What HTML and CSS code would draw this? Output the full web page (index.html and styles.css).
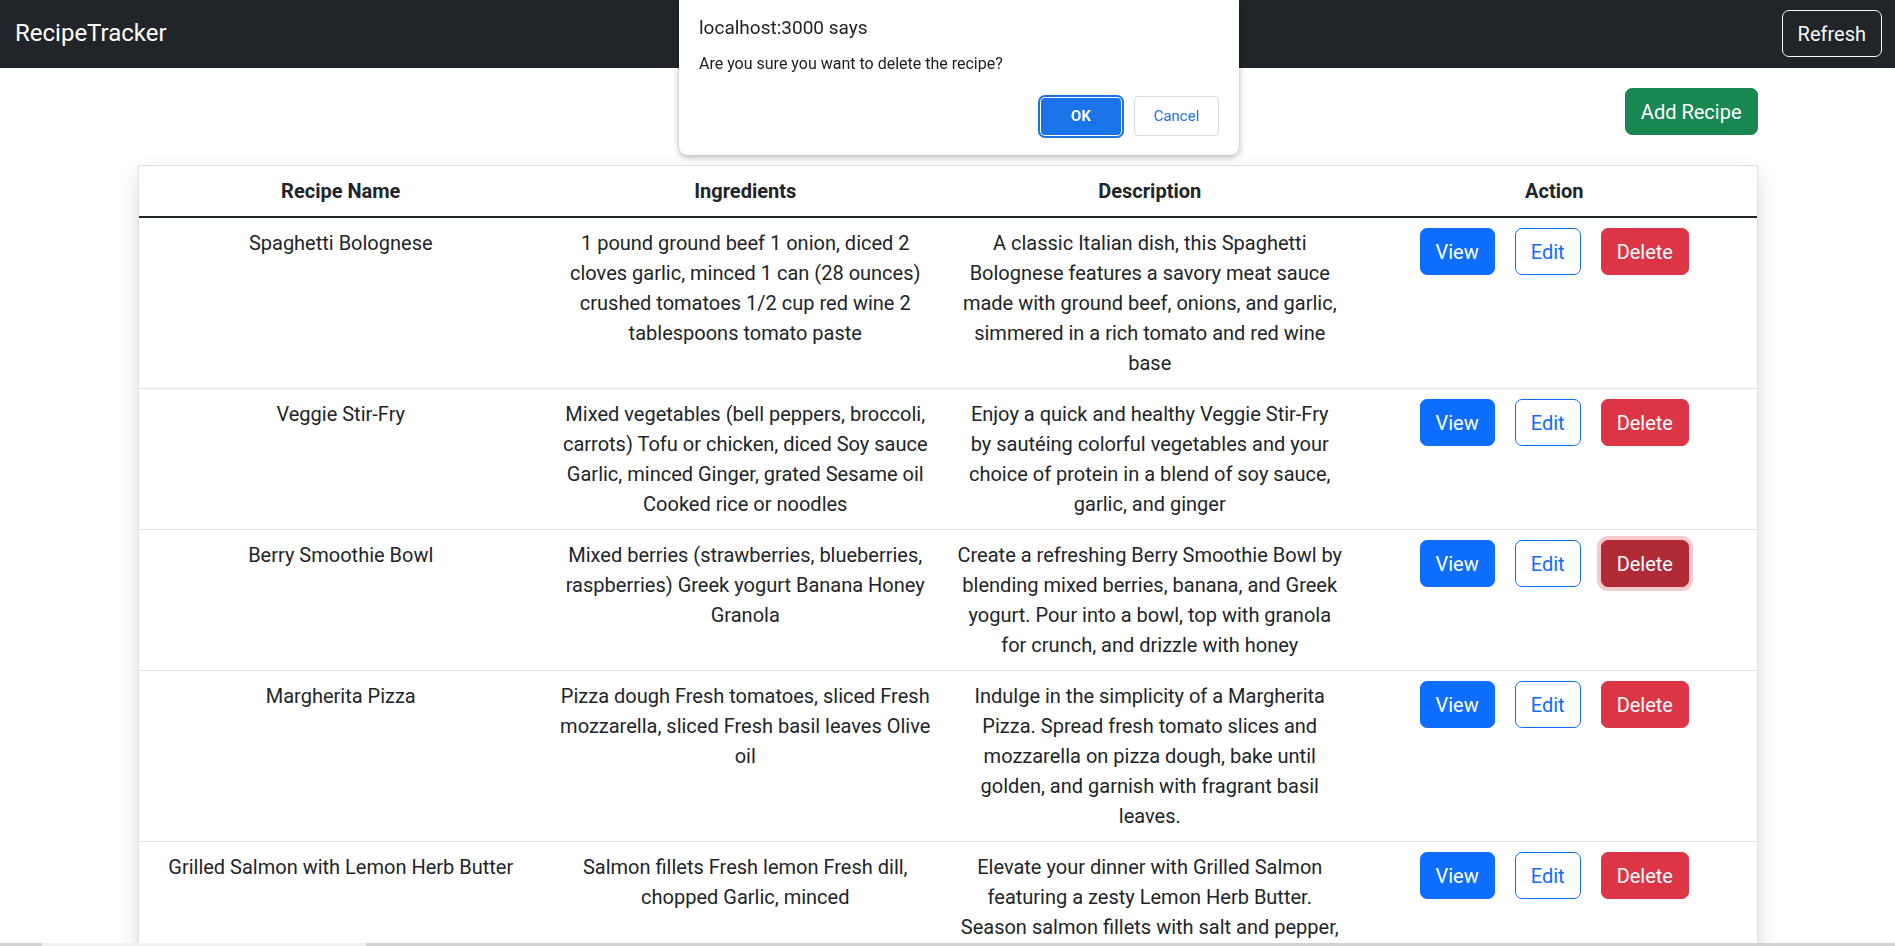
FILE: index.html
```html
<!DOCTYPE html>
<html lang="en">
<head>
<meta charset="utf-8">
<title>RecipeTracker</title>
<link rel="stylesheet" href="styles.css">
</head>
<body>
<nav class="navbar">
  <span class="brand">RecipeTracker</span>
  <button class="btn btn-outline-light">Refresh</button>
</nav>

<main class="container">
  <div class="toolbar">
    <button class="btn btn-success">Add Recipe</button>
  </div>

  <div class="table-card">
    <table class="recipes">
      <thead>
        <tr>
          <th>Recipe Name</th>
          <th>Ingredients</th>
          <th>Description</th>
          <th>Action</th>
        </tr>
      </thead>
      <tbody>
        <tr>
          <td>Spaghetti Bolognese</td>
          <td>1 pound ground beef 1 onion, diced 2<br>cloves garlic, minced 1 can (28 ounces)<br>crushed tomatoes 1/2 cup red wine 2<br>tablespoons tomato paste</td>
          <td>A classic Italian dish, this Spaghetti<br>Bolognese features a savory meat sauce<br>made with ground beef, onions, and garlic,<br>simmered in a rich tomato and red wine<br>base</td>
          <td><div class="actions"><button class="btn btn-primary">View</button><button class="btn btn-outline-primary">Edit</button><button class="btn btn-danger">Delete</button></div></td>
        </tr>
        <tr>
          <td>Veggie Stir-Fry</td>
          <td>Mixed vegetables (bell peppers, broccoli,<br>carrots) Tofu or chicken, diced Soy sauce<br>Garlic, minced Ginger, grated Sesame oil<br>Cooked rice or noodles</td>
          <td>Enjoy a quick and healthy Veggie Stir-Fry<br>by sautéing colorful vegetables and your<br>choice of protein in a blend of soy sauce,<br>garlic, and ginger</td>
          <td><div class="actions"><button class="btn btn-primary">View</button><button class="btn btn-outline-primary">Edit</button><button class="btn btn-danger">Delete</button></div></td>
        </tr>
        <tr>
          <td>Berry Smoothie Bowl</td>
          <td>Mixed berries (strawberries, blueberries,<br>raspberries) Greek yogurt Banana Honey<br>Granola</td>
          <td>Create a refreshing Berry Smoothie Bowl by<br>blending mixed berries, banana, and Greek<br>yogurt. Pour into a bowl, top with granola<br>for crunch, and drizzle with honey</td>
          <td><div class="actions"><button class="btn btn-primary">View</button><button class="btn btn-outline-primary">Edit</button><button class="btn btn-danger is-focused">Delete</button></div></td>
        </tr>
        <tr>
          <td>Margherita Pizza</td>
          <td>Pizza dough Fresh tomatoes, sliced Fresh<br>mozzarella, sliced Fresh basil leaves Olive<br>oil</td>
          <td>Indulge in the simplicity of a Margherita<br>Pizza. Spread fresh tomato slices and<br>mozzarella on pizza dough, bake until<br>golden, and garnish with fragrant basil<br>leaves.</td>
          <td><div class="actions"><button class="btn btn-primary">View</button><button class="btn btn-outline-primary">Edit</button><button class="btn btn-danger">Delete</button></div></td>
        </tr>
        <tr>
          <td>Grilled Salmon with Lemon Herb Butter</td>
          <td>Salmon fillets Fresh lemon Fresh dill,<br>chopped Garlic, minced</td>
          <td>Elevate your dinner with Grilled Salmon<br>featuring a zesty Lemon Herb Butter.<br>Season salmon fillets with salt and pepper,<br>grill to perfection, and top with a<br>homemade lemon herb butter.</td>
          <td><div class="actions"><button class="btn btn-primary">View</button><button class="btn btn-outline-primary">Edit</button><button class="btn btn-danger">Delete</button></div></td>
        </tr>
      </tbody>
    </table>
  </div>
</main>

<div class="alert-dialog" role="alertdialog">
  <div class="alert-title">localhost:3000 says</div>
  <div class="alert-message">Are you sure you want to delete the recipe?</div>
  <div class="alert-buttons">
    <button class="alert-btn alert-ok">OK</button>
    <button class="alert-btn alert-cancel">Cancel</button>
  </div>
</div>

<div class="bottom-strip"><span class="strip-thumb"></span></div>
</body>
</html>
```

FILE: styles.css
```css
* {
  box-sizing: border-box;
}

html,
body {
  margin: 0;
  padding: 0;
}

body {
  font-family: "Segoe UI", Roboto, "Liberation Sans", sans-serif;
  font-size: 20px;
  line-height: 30px;
  color: #212529;
  background: #ffffff;
  overflow: hidden;
}

/* ---------- navbar ---------- */
.navbar {
  display: flex;
  align-items: center;
  justify-content: space-between;
  background: #212529;
  padding: 10px 13px 11px 15px;
}

.brand {
  color: #ffffff;
  font-size: 24px;
  line-height: 37px;
}

/* ---------- buttons ---------- */
.btn {
  font-family: inherit;
  font-size: 20px;
  line-height: 30px;
  padding: 7.5px 15px;
  border: 1px solid transparent;
  border-radius: 7px;
  background: transparent;
  cursor: pointer;
}

.btn-outline-light {
  color: #f8f9fa;
  border-color: #f8f9fa;
}

.btn-success {
  color: #ffffff;
  background: #198754;
  border-color: #198754;
}

.btn-primary {
  color: #ffffff;
  background: #0d6efd;
  border-color: #0d6efd;
}

.btn-outline-primary {
  color: #0d6efd;
  background: #ffffff;
  border-color: #0d6efd;
}

.btn-danger {
  color: #ffffff;
  background: #dc3545;
  border-color: #dc3545;
}

.btn-danger.is-focused {
  background: #b02a37;
  border-color: #b02a37;
  box-shadow: 0 0 0 4px rgba(225, 83, 97, 0.3);
}

/* ---------- layout ---------- */
.container {
  max-width: 1650px;
  margin: 0 auto;
  padding: 0 15px;
}

.toolbar {
  display: flex;
  justify-content: flex-end;
  margin-top: 20px;
  margin-bottom: 30px;
}

.table-card {
  border: 1px solid #dee2e6;
  box-shadow: 0 10px 20px rgba(0, 0, 0, 0.15);
  background: #ffffff;
}

/* ---------- table ---------- */
.recipes {
  width: 100%;
  border-collapse: collapse;
  table-layout: fixed;
}

.recipes th,
.recipes td {
  width: 25%;
  padding: 10px;
  text-align: center;
  vertical-align: top;
  white-space: nowrap;
}

.recipes th {
  font-weight: 700;
  border-bottom: 2px solid #212529;
}

.recipes td {
  border-bottom: 1px solid #dee2e6;
}

.actions {
  display: inline-flex;
  gap: 20px;
}

/* ---------- native alert dialog ---------- */
.alert-dialog {
  position: fixed;
  top: 0;
  left: 679px;
  width: 560px;
  height: 155px;
  padding: 16px 20px 0 20px;
  background: #ffffff;
  border-radius: 0 0 8px 8px;
  box-shadow: 0 2px 6px rgba(0, 0, 0, 0.3), 0 0 1px rgba(0, 0, 0, 0.2);
  font-family: "Segoe UI", Roboto, "Liberation Sans", sans-serif;
  color: #202124;
}

.alert-title {
  font-size: 19px;
  line-height: 24px;
}

.alert-message {
  margin-top: 14px;
  font-size: 16px;
  line-height: 20px;
}

.alert-buttons {
  display: flex;
  justify-content: flex-end;
  align-items: center;
  gap: 13px;
  margin-top: 22px;
}

.alert-btn {
  font-family: inherit;
  font-size: 15px;
  border-radius: 4px;
  cursor: pointer;
}

.alert-ok {
  width: 80px;
  height: 37px;
  color: #ffffff;
  font-weight: 700;
  background: #1a73e8;
  border: none;
  box-shadow: 0 0 0 1px #ffffff, 0 0 0 3px #1a73e8;
}

.alert-cancel {
  width: 85px;
  height: 40px;
  color: #1a73e8;
  font-weight: 400;
  background: #ffffff;
  border: 1px solid #dadce0;
}

/* ---------- browser bottom strip ---------- */
.bottom-strip {
  position: fixed;
  left: 0;
  right: 0;
  bottom: 0;
  height: 3px;
  background: #d3d3d3;
}

.strip-thumb {
  display: block;
  margin-left: 42px;
  width: 324px;
  height: 3px;
  background: #f1f1f1;
}
```
